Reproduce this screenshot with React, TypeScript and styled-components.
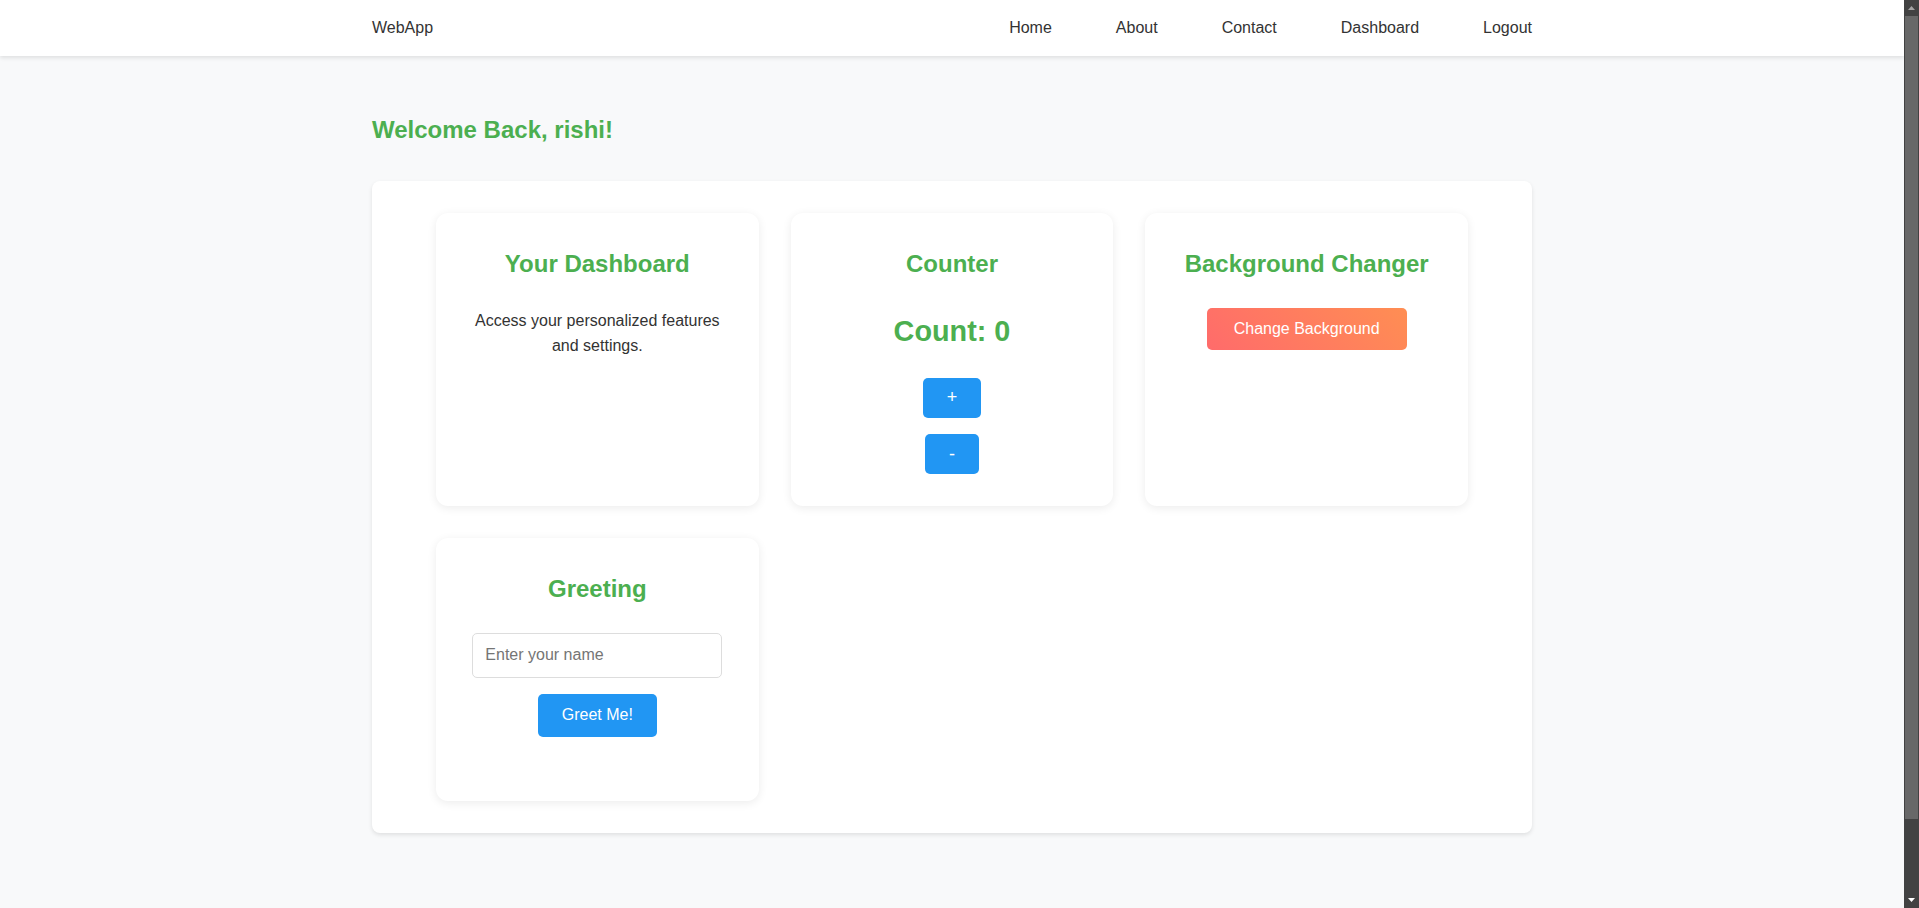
import React, { useState } from "react";
import styled, { createGlobalStyle } from "styled-components";

const GlobalStyle = createGlobalStyle`
  *, *::before, *::after {
    box-sizing: border-box;
  }
  html, body {
    margin: 0;
    height: 100%;
    overflow: hidden;
  }
  body {
    background: #f8f9fa;
    color: #333;
    font-family: "Liberation Sans", Arial, Helvetica, sans-serif;
    font-size: 16px;
    line-height: 1.6;
  }
`;

const Page = styled.div`
  display: flex;
  height: 100vh;
`;

const Viewport = styled.div`
  flex: 1;
  min-width: 0;
  overflow: hidden;
`;

const ScrollRail = styled.div`
  width: 15px;
  flex-shrink: 0;
  background: #424242;
  display: flex;
  flex-direction: column;
  align-items: center;
`;

const ArrowButton = styled.div`
  height: 16px;
  width: 100%;
  display: flex;
  align-items: center;
  justify-content: center;
`;

const Track = styled.div`
  flex: 1;
  width: 100%;
  padding: 0 1px;
`;

const Thumb = styled.div`
  height: 803px;
  background: #686868;
`;

const NavBar = styled.nav`
  height: 56px;
  background: #ffffff;
  box-shadow: 0 2px 4px rgba(0, 0, 0, 0.1);
  position: relative;
  z-index: 1;
`;

const Container = styled.div`
  max-width: 1200px;
  margin: 0 auto;
  padding: 0 20px;
  width: 100%;
`;

const NavInner = styled(Container)`
  height: 100%;
  display: flex;
  align-items: center;
  justify-content: space-between;
`;

const Brand = styled.a`
  color: #333;
  text-decoration: none;
  font-size: 16px;
`;

const NavLinks = styled.ul`
  display: flex;
  gap: 64px;
  list-style: none;
  margin: 0;
  padding: 0;
`;

const NavLink = styled.a`
  color: #333;
  text-decoration: none;
  font-size: 16px;
`;

const Main = styled.main`
  min-height: calc(100vh + 24px);
  padding: 32px 0;
`;

const Welcome = styled.h1`
  color: #4caf50;
  font-size: 24px;
  font-weight: bold;
  margin: 23px 0 32px;
`;

const Panel = styled.section`
  background: #ffffff;
  border-radius: 8px;
  box-shadow: 0 2px 4px rgba(0, 0, 0, 0.1);
  padding: 32px 64px;
`;

const Grid = styled.div`
  display: grid;
  grid-template-columns: repeat(3, 1fr);
  gap: 32px;
`;

const Card = styled.div`
  background: #ffffff;
  border-radius: 12px;
  box-shadow: 0 2px 10px rgba(0, 0, 0, 0.08);
  padding: 32px;
  display: flex;
  flex-direction: column;
  align-items: center;
  text-align: center;
`;

const CardTitle = styled.h2`
  color: #4caf50;
  font-size: 24px;
  font-weight: bold;
  margin: 0 0 24px;
`;

const CardText = styled.p`
  margin: 0;
  color: #333;
  font-size: 16px;
`;

const Count = styled.p`
  margin: 0 0 24px;
  color: #4caf50;
  font-size: 28.8px;
  font-weight: bold;
`;

const ButtonStack = styled.div`
  display: flex;
  flex-direction: column;
  align-items: center;
  gap: 16px;
`;

const BlueButton = styled.button<{ $big?: boolean }>`
  background: #2196f3;
  color: #ffffff;
  border: none;
  border-radius: 5px;
  font-family: "Liberation Sans", Arial, Helvetica, sans-serif;
  font-size: ${(p) => (p.$big ? "18px" : "16px")};
  line-height: normal;
  padding: ${(p) => (p.$big ? "9.6px 24px" : "12px 24px")};
  height: ${(p) => (p.$big ? "auto" : "43px")};
  cursor: pointer;
`;

const GradientButton = styled.button`
  background: linear-gradient(45deg, #ff6b6b, #ff8e53);
  color: #ffffff;
  border: none;
  border-radius: 5px;
  font-family: "Liberation Sans", Arial, Helvetica, sans-serif;
  font-size: 16px;
  line-height: normal;
  padding: 12px 27px;
  cursor: pointer;
`;

const NameInput = styled.input`
  width: 250px;
  height: 45px;
  padding: 12px;
  border: 1px solid #ddd;
  border-radius: 5px;
  background: #ffffff;
  color: #333;
  font-family: "Liberation Sans", Arial, Helvetica, sans-serif;
  font-size: 16px;
  line-height: normal;
  margin-bottom: 16px;
  outline: none;
  &::placeholder {
    color: #757575;
  }
`;

const GreetArea = styled.div`
  display: flex;
  flex-direction: column;
  align-items: center;
  padding-bottom: 32px;
`;

function Arrow({ up, color }: { up?: boolean; color: string }) {
  return (
    <svg width="7" height="4" viewBox="0 0 7 4">
      <polygon points={up ? "0,4 3.5,0 7,4" : "0,0 7,0 3.5,4"} fill={color} />
    </svg>
  );
}

export default function App() {
  const [count, setCount] = useState(0);
  const [name, setName] = useState("");

  return (
    <Page>
      <GlobalStyle />
      <Viewport>
        <NavBar>
          <NavInner>
            <Brand href="#">WebApp</Brand>
            <NavLinks>
              {["Home", "About", "Contact", "Dashboard", "Logout"].map((l) => (
                <li key={l}>
                  <NavLink href="#">{l}</NavLink>
                </li>
              ))}
            </NavLinks>
          </NavInner>
        </NavBar>
        <Main>
          <Container>
            <Welcome>Welcome Back, rishi!</Welcome>
            <Panel>
              <Grid>
                <Card>
                  <CardTitle>Your Dashboard</CardTitle>
                  <CardText>Access your personalized features and settings.</CardText>
                </Card>
                <Card>
                  <CardTitle>Counter</CardTitle>
                  <Count>Count: {count}</Count>
                  <ButtonStack>
                    <BlueButton $big onClick={() => setCount(count + 1)}>+</BlueButton>
                    <BlueButton $big onClick={() => setCount(count - 1)}>-</BlueButton>
                  </ButtonStack>
                </Card>
                <Card>
                  <CardTitle>Background Changer</CardTitle>
                  <GradientButton>Change Background</GradientButton>
                </Card>
                <Card>
                  <CardTitle>Greeting</CardTitle>
                  <GreetArea>
                    <NameInput
                      placeholder="Enter your name"
                      value={name}
                      onChange={(e) => setName(e.target.value)}
                    />
                    <BlueButton>Greet Me!</BlueButton>
                  </GreetArea>
                </Card>
              </Grid>
            </Panel>
          </Container>
        </Main>
      </Viewport>
      <ScrollRail aria-hidden="true">
        <ArrowButton>
          <Arrow up color="#a3a3a3" />
        </ArrowButton>
        <Track>
          <Thumb />
        </Track>
        <ArrowButton>
          <Arrow color="#ffffff" />
        </ArrowButton>
      </ScrollRail>
    </Page>
  );
}
